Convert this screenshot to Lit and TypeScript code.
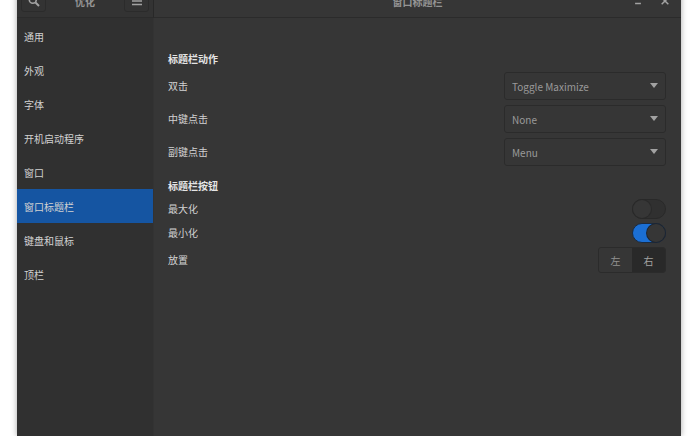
import { LitElement, html, css, svg } from "lit";
import { customElement, state } from "lit/decorators.js";
import { classMap } from "lit/directives/class-map.js";

const PAGES = ["通用", "外观", "字体", "开机启动程序", "窗口", "窗口标题栏", "键盘和鼠标", "顶栏"];

const ACTIONS = [
  { id: "double", label: "双击", value: "Toggle Maximize" },
  { id: "middle", label: "中键点击", value: "None" },
  { id: "secondary", label: "副键点击", value: "Menu" },
];
const ACTION_VALUES = ["Toggle Maximize", "None", "Menu"];

const icon = (size: number, body: unknown) =>
  html`<svg width=${size} height=${size} viewBox="0 0 12 12" fill="none" stroke="currentColor" aria-hidden="true">${body}</svg>`;

@customElement("app-root")
export class AppRoot extends LitElement {
  @state() private page = "窗口标题栏";
  @state() private placement = "右";

  static styles = css`
    :host {
      display: block;
      min-height: 100vh;
      overflow: hidden;
      background: #fff;
      font: 10px/18px "Noto Sans CJK SC", "Noto Sans", sans-serif;
      color: #d2d2d2;
    }
    * { box-sizing: border-box; }
    button, select {
      font: inherit;
      color: inherit;
      margin: 0;
      padding: 0;
      border: 0;
      background: none;
    }
    .window {
      display: grid;
      grid-template-columns: 137px 1fr;
      grid-template-rows: 34px 1fr;
      min-height: calc(100vh + 16px);
      margin: -16px 17px 0;
      background: #363636;
      box-shadow: 0 0 6px rgba(0, 0, 0, 0.35);
    }
    .bar {
      display: flex;
      align-items: center;
      justify-content: space-between;
      border-bottom: 1px solid #2b2b2b;
      background: #363636;
      color: #a2a2a2;
    }
    .bar.side { padding: 0 4px; background: #333; border-right: 1px solid #282828; }
    .bar.main { display: grid; grid-template-columns: 1fr auto 1fr; padding: 0 9px; }
    .title { margin: 0; padding-top: 2px; font-size: 10px; font-weight: 700; color: #949494; }
    .tool {
      display: grid;
      place-items: center;
      width: 25px;
      height: 22px;
      border: 1px solid #2b2b2b;
      border-radius: 3px;
    }
    .controls { grid-column: 3; display: flex; justify-content: flex-end; gap: 12px; }
    .controls button { display: grid; place-items: center; width: 15px; height: 16px; }
    .main .title { grid-column: 2; }
    .nav { background: #303030; border-right: 1px solid #333; padding-top: 1px; }
    .link {
      display: flex;
      align-items: center;
      height: 34px;
      padding: 2px 7px 0;
      color: inherit;
      text-decoration: none;
    }
    .link.on { background: #1555a2; }
    .content { padding: 32px 15px 16px 14px; }
    .heading { margin: 0 0 4px; font-size: 10px; font-weight: 700; color: #e4e4e4; }
    .group { display: flex; flex-direction: column; gap: 4px; }
    .group.actions { gap: 5px; margin-bottom: 11px; }
    .row { display: flex; align-items: center; justify-content: space-between; }
    .pick {
      position: relative;
      width: 162px;
      color: #9a9a9a;
    }
    .pick select {
      display: block;
      width: 100%;
      height: 28px;
      padding: 2px 20px 0 7px;
      appearance: none;
      border: 1px solid #2b2b2b;
      border-radius: 3px;
    }
    .pick svg { position: absolute; right: 8px; top: 11px; fill: #a2a2a2; pointer-events: none; }
    .switch {
      appearance: none;
      display: flex;
      width: 34px;
      height: 20px;
      margin: 0;
      border: 1px solid #292929;
      border-radius: 10px;
      background: #303030;
    }
    .switch::before {
      content: "";
      width: 18px;
      height: 18px;
      border-radius: 9px;
      background: #363636;
      box-shadow: 0 0 0 1px #292929;
    }
    .switch:checked { justify-content: flex-end; background: #1b6fd4; border-color: #1b2b40; }
    .switch:checked::before { box-shadow: 0 0 0 1px #1d2531; }
    .pair { display: flex; border: 1px solid #2b2b2b; border-radius: 3px; overflow: hidden; }
    .pair button { width: 33px; height: 24px; padding-top: 2px; color: #929292; }
    .pair .on { background: #292929; color: #a2a2a2; }
  `;

  render() {
    return html`
      <div class="window">
        <header class="bar side">
          <button class="tool" aria-label="搜索">
            ${icon(12, svg`<circle cx="4.8" cy="4.8" r="3.5" stroke-width="1.6"/><path d="M7.5 7.5 11 11" stroke-width="2"/>`)}
          </button>
          <h1 class="title">优化</h1>
          <button class="tool" aria-label="菜单">
            ${icon(12, svg`<path d="M1 2.5h10M1 6h10M1 9.5h10" stroke-width="1.4"/>`)}
          </button>
        </header>
        <header class="bar main">
          <h2 class="title">${this.page}</h2>
          <div class="controls">
            <button aria-label="最小化">${icon(10, svg`<path d="M2.5 9h7" stroke-width="1.8"/>`)}</button>
            <button aria-label="关闭">${icon(10, svg`<path d="m2 2 8 8M10 2l-8 8" stroke-width="1.8"/>`)}</button>
          </div>
        </header>
        <nav class="nav">
          ${PAGES.map(
            (p) => html`<a href="#" class=${classMap({ link: true, on: p === this.page })}
              @click=${(e: Event) => { e.preventDefault(); this.page = p; }}>${p}</a>`
          )}
        </nav>
        <main class="content">
          <h3 class="heading">标题栏动作</h3>
          <div class="group actions">
            ${ACTIONS.map(
              (a) => html`<div class="row">
                <label for=${a.id}>${a.label}</label>
                <div class="pick">
                  <select id=${a.id}>
                    ${ACTION_VALUES.map((v) => html`<option ?selected=${v === a.value}>${v}</option>`)}
                  </select>
                  <svg width="8" height="5" viewBox="0 0 8 5" aria-hidden="true"><path d="M0 0h8L4 5z"/></svg>
                </div>
              </div>`
            )}
          </div>
          <h3 class="heading">标题栏按钮</h3>
          <div class="group">
            <div class="row"><label for="max">最大化</label><input class="switch" id="max" type="checkbox" role="switch" /></div>
            <div class="row"><label for="min">最小化</label><input class="switch" id="min" type="checkbox" role="switch" checked /></div>
            <div class="row">
              <span id="place">放置</span>
              <div class="pair" role="group" aria-labelledby="place">
                ${["左", "右"].map(
                  (s) => html`<button class=${classMap({ on: s === this.placement })}
                    aria-pressed=${s === this.placement} @click=${() => (this.placement = s)}>${s}</button>`
                )}
              </div>
            </div>
          </div>
        </main>
      </div>
    `;
  }
}
